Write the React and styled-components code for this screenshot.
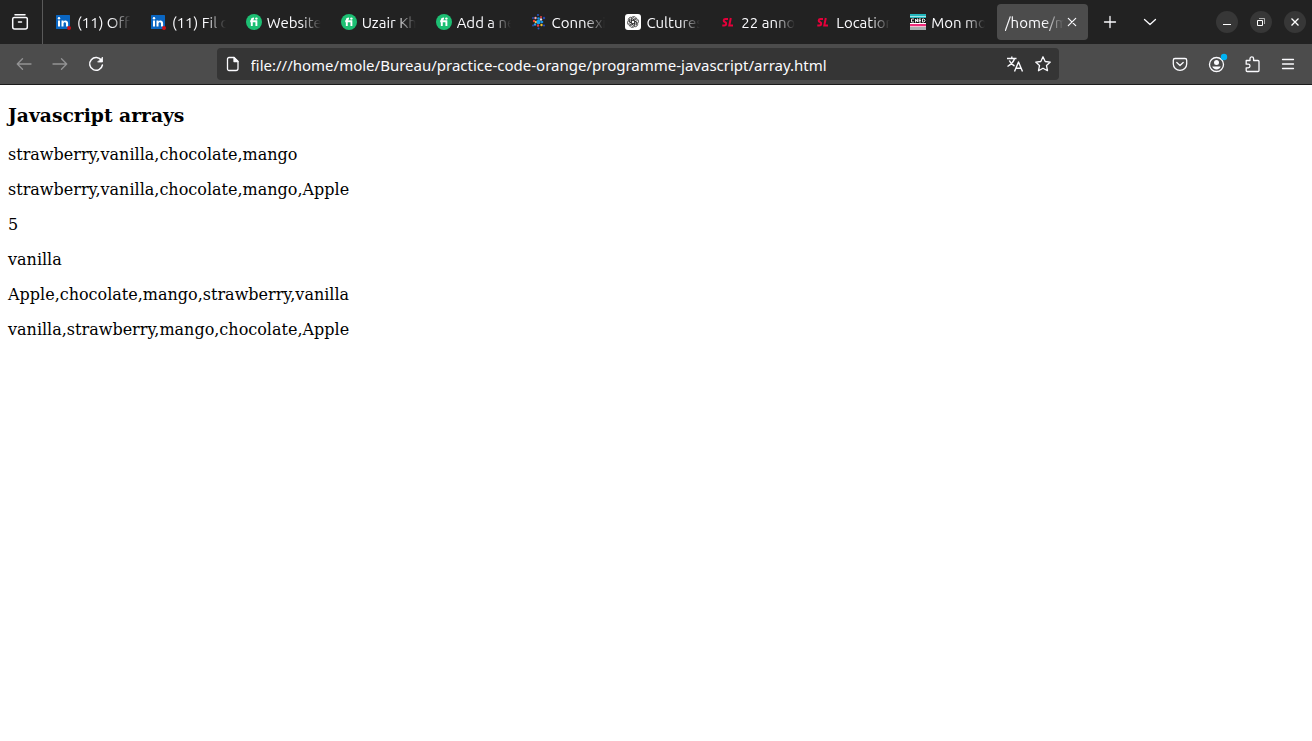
import React from "react";
import styled, { createGlobalStyle } from "styled-components";

const GlobalStyle = createGlobalStyle`
  *, *::before, *::after { box-sizing: border-box; }
  body { margin: 0; background: #fff; }
`;

const uiFont = `"Ubuntu", "Noto Sans", sans-serif`;

const Browser = styled.div`
  display: flex;
  flex-direction: column;
  min-height: 100vh;
  font: 15px/20px ${uiFont};
  color: #fbfbfe;
`;

const TitleBar = styled.header`
  display: flex;
  align-items: stretch;
  height: 44px;
  background: #222;
`;

const IconButton = styled.button`
  display: flex;
  flex: none;
  align-items: center;
  justify-content: center;
  width: ${(p) => p.$width || 36}px;
  padding: 0;
  border: 0;
  background: none;
  color: inherit;
  opacity: ${(p) => (p.disabled ? 0.4 : 1)};
`;

const ViewDivider = styled.div`
  flex: none;
  width: 1px;
  margin: 0 3px 0 2px;
  background: #5a5a5a;
`;

const TabStrip = styled.nav`
  display: flex;
  flex: 1;
  min-width: 0;
`;

const Tab = styled.div`
  display: flex;
  flex: 1;
  align-items: center;
  min-width: 0;
  height: 36px;
  margin: 4px 2px;
  padding: 0 8px;
  border-radius: 4px;
  background: ${(p) => (p.$active ? "#4c4c4c" : "transparent")};
`;

const Favicon = styled.svg`
  flex: none;
  width: 16px;
  height: 16px;
  margin-right: 5px;
  overflow: visible;
`;

const TabLabel = styled.a`
  flex: 1;
  min-width: 0;
  padding-top: 2px;
  overflow: hidden;
  color: inherit;
  text-decoration: none;
  white-space: nowrap;
  mask-image: linear-gradient(to left, transparent, #000 20px);
`;

const WindowControls = styled.div`
  display: flex;
  flex: none;
  align-items: center;
  gap: 12px;
  margin-left: 46px;
  padding-right: 6px;
`;

const RoundButton = styled.button`
  display: flex;
  align-items: center;
  justify-content: center;
  width: 22px;
  height: 22px;
  padding: 0;
  border: 0;
  border-radius: 50%;
  background: #373737;
  color: #fff;
`;

const Toolbar = styled.div`
  display: flex;
  align-items: stretch;
  height: 41px;
  padding: 0 6px;
  border-bottom: 1px solid #1b1b1b;
  background: #4c4c4c;
`;

const Spacer = styled.div`
  flex: 103 1 0;
`;

const AddressBar = styled.form`
  display: flex;
  flex: 842 1 0;
  min-width: 0;
  margin: 4px 0;
  padding: 0 2px;
  border-radius: 4px;
  background: #353535;
`;

const AddressInput = styled.input`
  flex: 1;
  min-width: 0;
  padding: 1px 4px 0;
  border: 0;
  outline: 0;
  background: none;
  color: inherit;
  font: 15px/20px "Noto Sans", sans-serif;
`;

const Document = styled.main`
  flex: 1;
  padding: 19px 8px;
  background: #fff;
  color: #000;
  font: 16px/19px "DejaVu Serif", serif;
`;

const Heading = styled.h3`
  margin: 0 0 18px;
  line-height: 23px;
`;

const Result = styled.p`
  margin: 0 0 16px;
`;

function Icon({ children, ...rest }) {
  return (
    <svg width="16" height="16" viewBox="0 0 16 16" fill="none" stroke="currentColor"
      strokeWidth="1.3" strokeLinecap="round" strokeLinejoin="round" aria-hidden="true" overflow="visible" {...rest}>
      {children}
    </svg>
  );
}

const BadgedIcon = styled(Icon)`
  overflow: visible;
`;

function LinkedInLogo() {
  return (
    <Favicon viewBox="0 0 16 16" aria-hidden="true">
      <rect y="1" width="14" height="14" rx="0.5" fill="#0a66c2" />
      <path d="M2 6.500h2v6H2z M5.500 6.500h2v1c.8-1.600 4.600-1.800 4.600 1.700v3.300H10V9.800c0-2.100-2.500-2-2.500 0v2.700h-2z" fill="#fff" />
      <circle cx="3" cy="4.300" r="1.200" fill="#fff" />
      <circle cx="13" cy="14" r="2" fill="#cb1118" />
    </Favicon>
  );
}

function FiverrLogo() {
  return (
    <Favicon viewBox="0 0 16 16" aria-hidden="true">
      <circle cx="8" cy="8" r="8" fill="#1dbf73" />
      <path d="M5.800 12V6.200c0-1.300.7-1.700 2.200-1.700M4.200 7.200h6.200V12" fill="none" stroke="#fff" strokeWidth="1.900" />
      <circle cx="10.400" cy="4.600" r="1.200" fill="#fff" />
    </Favicon>
  );
}

const sparkDots = [
  [7, 1, 1, "#2459c9"], [10, 3, 1, "#e6413e"], [13, 4, 1.2, "#2747b0"], [4.5, 4, 1.2, "#f0a7b9"],
  [2, 4, 1, "#2747b0"], [7.5, 4.5, 1.3, "#1496e8"], [10, 5.5, 1.2, "#e8e3ee"], [3, 7, 1.2, "#ef4136"],
  [5, 8, 1.3, "#f6c33c"], [7.5, 8, 2.2, "#10a2f1"], [11, 8, 1.3, "#168ee3"], [4, 10.5, 1.2, "#2c9bea"],
  [7, 11.5, 1.2, "#eb3f49"], [10.5, 11, 1.2, "#f1c02e"], [13, 11.5, 1.1, "#2448b5"], [2, 11.5, 1, "#2448b5"],
  [7.5, 14.5, 1, "#2459c9"],
];

function SparkLogo() {
  return (
    <Favicon viewBox="0 0 16 16" aria-hidden="true">
      {sparkDots.map(([cx, cy, r, fill]) => <circle key={`${cx}-${cy}`} cx={cx} cy={cy} r={r} fill={fill} />)}
    </Favicon>
  );
}

function ChatLogo() {
  return (
    <Favicon viewBox="0 0 16 16" aria-hidden="true">
      <rect width="16" height="16" rx="3" fill="#fff" />
      <g fill="none" stroke="#222" strokeWidth="0.7" strokeLinejoin="round">
        {[0, 60, 120, 180, 240, 300].map((angle) => (
          <path key={angle} transform={`rotate(${angle} 8 8)`} d="M6.2 9V5.1c0-3.2 4.6-3.5 5.1-.5M6.2 7l3.5-2 2.9 1.7" />
        ))}
      </g>
    </Favicon>
  );
}

function SLLogo() {
  return (
    <Favicon viewBox="0 0 16 16" aria-hidden="true">
      <path d="M8 5H5.500C3.300 5 3.100 7.500 4.900 8c2 .8 1.700 3.400-.6 3.400H2.300M10.800 4L9.300 11.400h3.700" fill="none" stroke="#e4003a" strokeWidth="2" />
    </Favicon>
  );
}

function CnedLogo() {
  return (
    <Favicon viewBox="0 0 16 16" aria-hidden="true">
      <path fill="#24b6bd" d="M0 0h16v4H0z" />
      <path fill="#a5e2e2" d="M0 2h16v1H0z" />
      <path fill="#151515" d="M0 4h16v5H0z" />
      <path fill="#fff" d="M0 9h16v1H0z" />
      <path fill="#ee2b7b" d="M0 10h16v2H0z" />
      <path fill="#f3bfd0" d="M0 12h16v1H0z" />
      <path fill="#a9aeb1" d="M0 13h16v3H0z" />
      <path d="M4 5H1.5v3H4M5.5 8.500V5l2 3V4.500M11 5H9v3h2M9 6.500h2M12.500 5v3h1.500l1-1V6l-1-1z" fill="none" stroke="#fff" strokeWidth="0.9" />
    </Favicon>
  );
}

const tabs = [
  { Logo: LinkedInLogo, title: "(11) Offres" },
  { Logo: LinkedInLogo, title: "(11) Fil d’actualité" },
  { Logo: FiverrLogo, title: "Website" },
  { Logo: FiverrLogo, title: "Uzair Khan" },
  { Logo: FiverrLogo, title: "Add a new" },
  { Logo: SparkLogo, title: "Connexion" },
  { Logo: ChatLogo, title: "Cultures" },
  { Logo: SLLogo, title: "22 annonces" },
  { Logo: SLLogo, title: "Location" },
  { Logo: CnedLogo, title: "Mon mode" },
];

const results = [
  "strawberry,vanilla,chocolate,mango",
  "strawberry,vanilla,chocolate,mango,Apple",
  "5",
  "vanilla",
  "Apple,chocolate,mango,strawberry,vanilla",
  "vanilla,strawberry,mango,chocolate,Apple",
];

export default function App() {
  return (
    <Browser>
      <GlobalStyle />
      <TitleBar>
        <IconButton $width={40} aria-label="Firefox View">
          <Icon strokeWidth="1.5"><path d="M3 .8h10M2 3.500h12a1.300 1.300 0 011.300 1.500v8A2 2 0 0113.300 15H2.700a2 2 0 01-2-2V5A1.500 1.500 0 012 3.500zM6.500 8h3" /></Icon>
        </IconButton>
        <ViewDivider />
        <TabStrip aria-label="Tabs">
          {tabs.map(({ Logo, title }) => (
            <Tab key={title}>
              <Logo />
              <TabLabel href="#">{title}</TabLabel>
            </Tab>
          ))}
          <Tab $active>
            <TabLabel href="#" aria-current="page">/home/mole</TabLabel>
            <IconButton $width={16} aria-label="Close tab">
              <Icon strokeWidth="1.200"><path d="M4.300 4.300l7.400 7.400M11.700 4.300l-7.400 7.400" /></Icon>
            </IconButton>
          </Tab>
        </TabStrip>
        <IconButton $width={40} aria-label="New tab"><Icon><path d="M8 2.500v11M2.500 8h11" /></Icon></IconButton>
        <IconButton $width={40} aria-label="List all tabs"><Icon><path d="M2.500 5.500L8 10.500l5.500-5" /></Icon></IconButton>
        <WindowControls>
          <RoundButton aria-label="Minimize"><Icon strokeLinecap="butt"><path d="M4 10.500h8" strokeWidth="1" /></Icon></RoundButton>
          <RoundButton aria-label="Restore">
            <Icon strokeLinejoin="miter" strokeLinecap="butt" strokeWidth="1">
              <path d="M4.500 6.500h5v5h-5z" />
              <path d="M6 4.500h5.500V10" opacity="0.6" />
            </Icon>
          </RoundButton>
          <RoundButton aria-label="Close"><Icon strokeLinecap="butt"><path d="M4.500 4.500l7 7M11.500 4.500l-7 7" /></Icon></RoundButton>
        </WindowControls>
      </TitleBar>
      <Toolbar>
        <IconButton disabled aria-label="Back"><Icon><path d="M15 8H1.500M6.500 2.800L1.300 8l5.200 5.200" /></Icon></IconButton>
        <IconButton disabled aria-label="Forward"><Icon><path d="M1 8h13.500M9.500 2.800L14.700 8l-5.200 5.200" /></Icon></IconButton>
        <IconButton aria-label="Reload">
          <Icon strokeWidth="1.500"><path d="M13.500 4.500A6.400 6.400 0 1014.400 9" /><path d="M14.500 1.500v4.500H10z" fill="currentColor" strokeWidth="0.8" /></Icon>
        </IconButton>
        <Spacer />
        <AddressBar onSubmit={(e) => e.preventDefault()}>
          <IconButton $width={28} type="button" aria-label="Page information">
            <Icon><path d="M4 1.500h5l4 4v7a2 2 0 01-2 2H4a1.500 1.500 0 01-1.500-1.500V3A1.500 1.500 0 014 1.500z" /><path d="M9 1.500v4h4z" fill="currentColor" /></Icon>
          </IconButton>
          <AddressInput aria-label="Address" spellCheck={false}
            defaultValue="file:///home/mole/Bureau/practice-code-orange/programme-javascript/array.html" />
          <IconButton $width={28} type="button" aria-label="Translate page">
            <Icon strokeWidth="1.400" strokeLinecap="butt"><path d="M0 2.500h9.500M4.800 .500v2M7.500 2.500C6.800 5.500 4 8.500.500 10.500M2.300 4.500c1 2.500 2.800 4.300 5.200 5.500M7.500 15.500L11.500 6l4 9.500M9 12.300h5" /></Icon>
          </IconButton>
          <IconButton $width={28} type="button" aria-label="Bookmark page">
            <Icon><path d="M8 .800l2.200 4.700 5.100.600-3.800 3.500 1 5.100L8 12.200l-4.500 2.500 1-5.100L.700 6.100l5.100-.6z" /></Icon>
          </IconButton>
        </AddressBar>
        <Spacer />
        <IconButton aria-label="Save to Pocket">
          <Icon><path d="M3 2.500h10a1.700 1.700 0 011.700 1.700V8a6.700 6.300 0 01-13.400 0V4.200A1.700 1.700 0 013 2.500zM4.800 6.500L8 9.500l3.200-3" /></Icon>
        </IconButton>
        <IconButton aria-label="Account">
          <BadgedIcon>
            <circle cx="8.500" cy="8.500" r="7" />
            <circle cx="8.500" cy="6.500" r="2.500" fill="currentColor" stroke="none" />
            <path d="M4.300 10.500h8.400c-.5 1.800-2.200 2.900-4.200 2.900s-3.700-1.100-4.200-2.900z" fill="currentColor" stroke="none" />
            <circle cx="16" cy="1" r="3.200" fill="#00b3f4" stroke="none" />
          </BadgedIcon>
        </IconButton>
        <IconButton aria-label="Extensions">
          <Icon><path d="M2.200 4.500H6V2.700a1.800 1.800 0 013.600 0v1.800H14a1 1 0 011 1v9a1 1 0 01-1 1H3.200a1 1 0 01-1-1v-2.700h2a1.800 1.800 0 000-3.600h-2z" /></Icon>
        </IconButton>
        <IconButton aria-label="Application menu"><Icon><path d="M2.500 3.500h11M2.500 8h11M2.500 12.500h11" /></Icon></IconButton>
      </Toolbar>
      <Document>
        <Heading>Javascript arrays</Heading>
        {results.map((text) => <Result key={text}>{text}</Result>)}
      </Document>
    </Browser>
  );
}
